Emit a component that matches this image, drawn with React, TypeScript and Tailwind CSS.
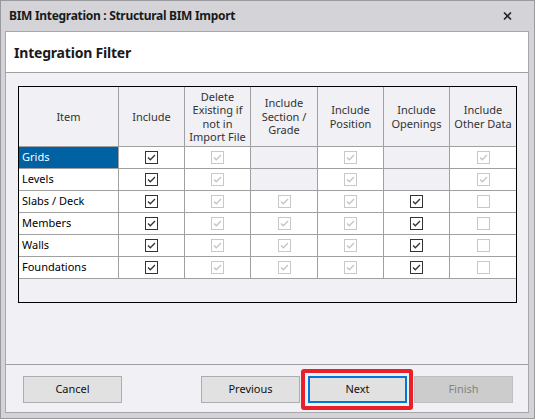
import React from "react";

type Cell = "on" | "dis-on" | "dis-off" | "na";

type Row = {
  name: string;
  cells: Cell[]; // include, delete, section, position, openings, other
};

const rows: Row[] = [
  { name: "Grids", cells: ["on", "dis-on", "na", "dis-on", "na", "dis-on"] },
  { name: "Levels", cells: ["on", "dis-on", "na", "dis-on", "na", "dis-on"] },
  { name: "Slabs / Deck", cells: ["on", "dis-on", "dis-on", "dis-on", "on", "dis-off"] },
  { name: "Members", cells: ["on", "dis-on", "dis-on", "dis-on", "on", "dis-off"] },
  { name: "Walls", cells: ["on", "dis-on", "dis-on", "dis-on", "on", "dis-off"] },
  { name: "Foundations", cells: ["on", "dis-on", "dis-on", "dis-on", "on", "dis-off"] },
];

// header captions, already broken the way the grid wraps them
const headerLines: string[][] = [
  ["Item"],
  ["Include"],
  ["Delete", "Existing if", "not in", "Import File"],
  ["Include", "Section /", "Grade"],
  ["Include", "Position"],
  ["Include", "Openings"],
  ["Include", "Other Data"],
];

const cols = "grid grid-cols-[100px_66px_66px_67px_66px_66px_66px]";

// --------- checkbox ----------
function CheckBox({ state }: { state: Cell }) {
  if (state === "na") return null;
  const enabled = state === "on";
  const checked = state !== "dis-off";
  return (
    <span
      className={`flex h-[13px] w-[13px] items-center justify-center border bg-white ${
        enabled ? "border-[#333333]" : "border-[#c8c8c8]"
      }`}
    >
      {checked && (
        <svg width="11" height="11" viewBox="0 0 11 11">
          <polyline
            points="2,5.5 4.3,7.8 9,3"
            fill="none"
            stroke={enabled ? "#333333" : "#c4c4c4"}
            strokeWidth="1.3"
          />
        </svg>
      )}
    </span>
  );
}

function Button({ label, className }: { label: string; className: string }) {
  return (
    <div
      className={`flex h-[27px] w-[99px] items-center justify-center text-[11px] ${className}`}
    >
      {label}
    </div>
  );
}

export default function App() {
  return (
    <div
      className="flex h-[419px] w-[535px] flex-col border border-[#9a9a9e] bg-[#d4d4d8] text-[#111]"
      style={{ fontFamily: '"Segoe UI", "Noto Sans", sans-serif' }}
    >
      {/* title bar */}
      <div className="flex h-[30px] shrink-0 items-center justify-between pl-[8px] pr-[22px]">
        <span className="text-[12px] font-bold tracking-[-0.3px] text-[#1a1a1a]">
          BIM Integration : Structural BIM Import
        </span>
        <svg width="9" height="8" viewBox="0 0 9 8">
          <path d="M1 0.5 L8 7.5 M8 0.5 L1 7.5" stroke="#262626" strokeWidth="1.6" />
        </svg>
      </div>

      {/* dialog client area */}
      <div className="mb-[5px] ml-[4px] mr-[5px] flex flex-1 flex-col border border-[#a8a8ac] bg-[#f0f0f5]">
        <header className="flex h-[41px] shrink-0 items-center border-b border-[#a0a0a0] bg-white px-[8px]">
          <h1 className="text-[14px] font-bold tracking-[-0.2px] text-[#1a1a1a]">
            Integration Filter
          </h1>
        </header>

        <div className="flex-1 pl-[12px] pt-[13px]">
          <div className="flex h-[217px] w-[499px] flex-col border border-black bg-[#f0f0f5]">
            {/* header row */}
            <div className={`${cols} h-[60px] border-b border-[#a0a0a0]`}>
              {headerLines.map((lines, i) => (
                <div
                  key={lines.join(" ")}
                  className={`flex flex-col items-center justify-center text-center text-[11px] leading-[13.5px] text-[#333] ${
                    i < 6 ? "border-r border-[#a0a0a0]" : ""
                  }`}
                >
                  {lines.map((l) => (
                    <span key={l} className="whitespace-nowrap">
                      {l}
                    </span>
                  ))}
                </div>
              ))}
            </div>

            {/* data rows */}
            {rows.map((row, r) => (
              <div key={row.name} className={`${cols} h-[22px] border-b border-[#a0a0a0]`}>
                <div
                  className={`flex items-center border-r border-[#a0a0a0] pl-[3px] text-[11px] ${
                    r === 0 ? "bg-[#0062a3] text-white" : "bg-white text-black"
                  }`}
                >
                  {row.name}
                </div>
                {row.cells.map((c, i) => (
                  <div
                    key={i}
                    className={`flex items-center justify-center ${
                      i < 5 ? "border-r border-[#a0a0a0]" : ""
                    } ${c === "na" ? "bg-[#f0f0f5]" : "bg-white"}`}
                  >
                    <CheckBox state={c} />
                  </div>
                ))}
              </div>
            ))}
          </div>
        </div>

        {/* footer */}
        <footer className="flex h-[48px] shrink-0 items-start border-t border-[#a0a0a0] pt-[11px]">
          <Button label="Cancel" className="ml-[17px] border border-[#adadad] bg-[#e1e1e1]" />
          <Button label="Previous" className="ml-[79px] border border-[#adadad] bg-[#e1e1e1]" />
          <div className="relative ml-[8px]">
            <Button label="Next" className="border-2 border-[#0078d7] bg-[#e1e1e1]" />
            <span className="pointer-events-none absolute -bottom-[7px] -left-[7px] -right-[6px] -top-[7px] rounded-[3px] border-[4px] border-[#e8202a]" />
          </div>
          <Button
            label="Finish"
            className="ml-[7px] border border-[#bfbfbf] bg-[#cccccc] text-[#838383]"
          />
        </footer>
      </div>
    </div>
  );
}
